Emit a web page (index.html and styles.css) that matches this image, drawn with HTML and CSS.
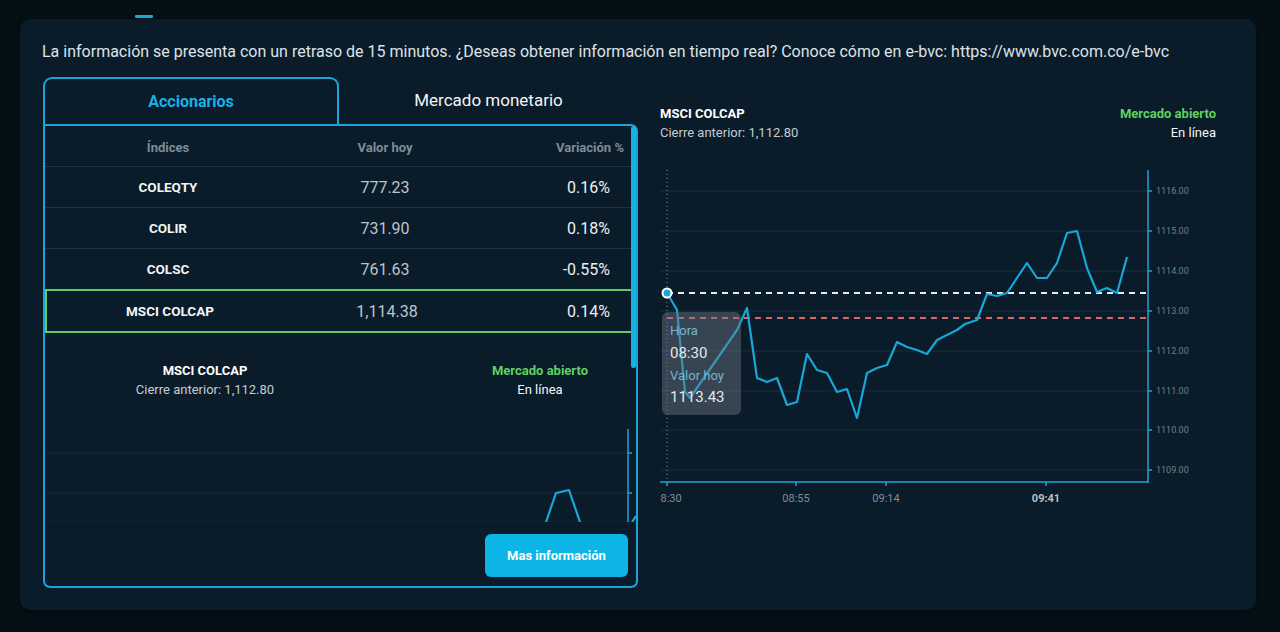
FILE: index.html
```html
<!DOCTYPE html>
<html lang="es">
<head>
<meta charset="utf-8">
<title>Índices</title>
<link rel="stylesheet" href="styles.css">
</head>
<body>
<div class="page">
  <div class="topmark"></div>
  <section class="card">
    <p class="notice">La información se presenta con un retraso de 15 minutos. ¿Deseas obtener información en tiempo real? Conoce cómo en e-bvc: https://www.bvc.com.co/e-bvc</p>
    <div class="content">
      <div class="left">
        <div class="tabs">
          <div class="tab tab-active">Accionarios</div>
          <div class="tab">Mercado monetario</div>
        </div>
        <div class="panel">
          <div class="scroll">
            <div class="table">
              <div class="row row-head">
                <div class="cell c1">Índices</div>
                <div class="cell c2">Valor hoy</div>
                <div class="cell c3">Variación %</div>
              </div>
              <div class="row">
                <div class="cell c1">COLEQTY</div>
                <div class="cell c2">777.23</div>
                <div class="cell c3">0.16%</div>
              </div>
              <div class="row">
                <div class="cell c1">COLIR</div>
                <div class="cell c2">731.90</div>
                <div class="cell c3">0.18%</div>
              </div>
              <div class="row">
                <div class="cell c1">COLSC</div>
                <div class="cell c2">761.63</div>
                <div class="cell c3">-0.55%</div>
              </div>
              <div class="row row-selected">
                <div class="cell c1">MSCI COLCAP</div>
                <div class="cell c2">1,114.38</div>
                <div class="cell c3">0.14%</div>
              </div>
            </div>
            <div class="summary summary-mini">
              <div class="sum-left">
                <div class="sum-title">MSCI COLCAP</div>
                <div class="sum-sub">Cierre anterior: 1,112.80</div>
              </div>
              <div class="sum-right">
                <div class="sum-status">Mercado abierto</div>
                <div class="sum-live">En línea</div>
              </div>
            </div>
            <svg class="mini" width="592" height="110" viewBox="0 0 592 110">
              <line x1="0" y1="34" x2="583" y2="34" class="grid"/>
              <line x1="0" y1="74" x2="583" y2="74" class="grid"/>
              <line x1="0" y1="103" x2="583" y2="103" class="grid"/>
              <line x1="583" y1="10" x2="583" y2="110" class="axis"/>
              <line x1="583" y1="34" x2="587" y2="34" class="axis"/>
              <line x1="583" y1="74" x2="587" y2="74" class="axis"/>
              <polyline points="501,103 511,74 524,71 535,103" class="series"/>
              <polyline points="587,103 591,97" class="series"/>
            </svg>
          </div>
          <div class="thumb"></div>
          <div class="actions"><button class="more">Mas información</button></div>
        </div>
      </div>
      <div class="right">
        <div class="summary summary-main">
          <div class="sum-left">
            <div class="sum-title">MSCI COLCAP</div>
            <div class="sum-sub">Cierre anterior: 1,112.80</div>
          </div>
          <div class="sum-right">
            <div class="sum-status">Mercado abierto</div>
            <div class="sum-live">En línea</div>
          </div>
        </div>
        <svg class="chart" width="574" height="360" viewBox="0 0 574 360">
          <line x1="0" y1="41" x2="488" y2="41" class="grid"/>
          <line x1="0" y1="81" x2="488" y2="81" class="grid"/>
          <line x1="0" y1="121" x2="488" y2="121" class="grid"/>
          <line x1="0" y1="161" x2="488" y2="161" class="grid"/>
          <line x1="0" y1="201" x2="488" y2="201" class="grid"/>
          <line x1="0" y1="241" x2="488" y2="241" class="grid"/>
          <line x1="0" y1="280" x2="488" y2="280" class="grid"/>
          <line x1="0" y1="320" x2="488" y2="320" class="grid"/>

          <line x1="488" y1="20" x2="488" y2="332.5" class="axis"/>
          <line x1="0" y1="332" x2="488.75" y2="332" class="axis"/>
          <g class="axis">
            <line x1="488" y1="41" x2="492" y2="41"/>
            <line x1="488" y1="81" x2="492" y2="81"/>
            <line x1="488" y1="121" x2="492" y2="121"/>
            <line x1="488" y1="161" x2="492" y2="161"/>
            <line x1="488" y1="201" x2="492" y2="201"/>
            <line x1="488" y1="241" x2="492" y2="241"/>
            <line x1="488" y1="280" x2="492" y2="280"/>
            <line x1="488" y1="320" x2="492" y2="320"/>
            <line x1="7" y1="332" x2="7" y2="336"/>
            <line x1="136" y1="332" x2="136" y2="336"/>
            <line x1="226" y1="332" x2="226" y2="336"/>
            <line x1="386" y1="332" x2="386" y2="336"/>
          </g>
          <g class="ylab">
            <text x="496" y="44">1116.00</text>
            <text x="496" y="84">1115.00</text>
            <text x="496" y="124">1114.00</text>
            <text x="496" y="164">1113.00</text>
            <text x="496" y="204">1112.00</text>
            <text x="496" y="244">1111.00</text>
            <text x="496" y="283">1110.00</text>
            <text x="496" y="323">1109.00</text>
          </g>
          <g class="xlab">
            <text x="8" y="352">08:30</text>
            <text x="136" y="352">08:55</text>
            <text x="226" y="352">09:14</text>
            <text x="386" y="352" class="xlab-strong">09:41</text>
          </g>

          <line x1="7" y1="20" x2="7" y2="332" class="crosshair"/>
          <line x1="7" y1="143" x2="488" y2="143" class="ref-white"/>
          <line x1="7" y1="168" x2="488" y2="168" class="ref-red"/>

          <polyline class="series" points="7,143 17,160 25,242 30,248 77,180 87,158 97,228 107,232 117,228 127,255 137,252 147,204 157,220 167,223 177,242 187,239 197,268 207,223 217,218 227,215 237,192 247,197 257,200 267,204 277,190 287,185 297,180 305,174 317,170 327,144 337,146 347,143 357,128 367,113 377,128 387,128 397,113 407,83 417,81 427,118 437,142 447,138 457,143 467,107"/>

          <circle cx="7" cy="143" r="5.5" class="dot-outer"/>
          <circle cx="7" cy="143" r="3.5" class="dot-inner"/>

          <rect x="2" y="162" width="79" height="103" rx="6" class="tip"/>
          <text x="10" y="185" class="tip-label">Hora</text>
          <text x="10" y="208" class="tip-value">08:30</text>
          <text x="10" y="230" class="tip-label">Valor hoy</text>
          <text x="10" y="252" class="tip-value">1113.43</text>
        </svg>
      </div>
    </div>
  </section>
</div>
</body>
</html>
```

FILE: styles.css
```css
* { box-sizing: border-box; }

html, body {
  margin: 0;
  padding: 0;
  background: #050f16;
  font-family: "Roboto", "Liberation Sans", sans-serif;
  color: #e8ecef;
}

.page {
  width: 1280px;
  height: 632px;
  padding: 15px 24px 0 20px;
  overflow: hidden;
}

.topmark {
  width: 18px;
  height: 3px;
  margin-left: 115px;
  margin-bottom: 1px;
  background: #19b0e4;
  border-radius: 1px;
}

.card {
  height: 591px;
  background: #0a1b29;
  border-radius: 10px;
  padding: 0 22px 0 23px;
  box-shadow: 0 2px 6px rgba(0, 0, 0, 0.4);
}

.notice {
  margin: 0 0 0 -1px;
  padding-top: 23px;
  height: 58px;
  font-size: 16px;
  line-height: 20px;
  color: #dde3e8;
  white-space: nowrap;
}

.content {
  display: flex;
  gap: 22px;
}

/* ---------- left column ---------- */
.left {
  width: 595px;
  flex: none;
}

.tabs {
  display: flex;
  height: 49px;
  margin-bottom: -2px;
  position: relative;
  z-index: 1;
}

.tab {
  display: flex;
  align-items: center;
  justify-content: center;
  font-size: 17px;
  color: #f2f4f6;
  padding-bottom: 3px;
}

.tab:first-child { width: 296px; }
.tab:last-child { flex: 1; }

.tab-active {
  border: 2px solid #1aa5da;
  border-bottom: none;
  border-radius: 9px 9px 0 0;
  color: #1cb0e6;
  font-weight: 700;
  font-size: 16px;
}

.panel {
  position: relative;
  height: 464px;
  border: 2px solid #1aa5da;
  border-radius: 0 7px 7px 7px;
  display: flex;
  flex-direction: column;
}

.scroll {
  height: 396px;
  overflow: hidden;
}

.table {
  width: 586px;
}

.row {
  display: grid;
  grid-template-columns: 246px 188px 1fr;
  height: 41px;
  align-items: center;
  border-bottom: 1px solid #233240;
}

.row-head {
  height: 41px;
  padding-top: 2px;
}

.cell {
  font-size: 16px;
  color: #edf0f2;
}

.c1 {
  text-align: center;
  font-weight: 700;
  font-size: 13.5px;
  color: #f3f5f7;
}

.c2 {
  text-align: center;
  color: #bcc5cc;
}

.c3 {
  text-align: right;
  padding-right: 21px;
}

.row-head .cell {
  font-size: 13px;
  font-weight: 700;
  color: #7d8c97;
}

.row-head .c3 {
  padding-right: 7px;
}

.row-selected {
  height: 44px;
  width: 588px;
  border: 2px solid #5fc95f;
  margin-top: -1px;
}

.summary {
  display: flex;
  justify-content: space-between;
  font-size: 13px;
  line-height: 19px;
}

.summary-mini {
  margin-top: 28px;
}

.summary-mini .sum-left {
  width: 320px;
  text-align: center;
}

.summary-mini .sum-right {
  width: 178px;
  margin-right: 7px;
  text-align: center;
}

.sum-title {
  font-weight: 700;
  color: #ffffff;
  font-size: 13px;
}

.sum-sub {
  color: #c5ccd2;
  font-size: 13px;
}

.sum-status {
  font-weight: 700;
  color: #5fd15f;
}

.sum-live {
  color: #f5f7f8;
}

.mini {
  display: block;
  margin-top: 20px;
}

.thumb {
  position: absolute;
  top: 0;
  right: 0;
  width: 5px;
  height: 242px;
  border-radius: 3px;
  background: #16b2e6;
}

.actions {
  display: flex;
  justify-content: flex-end;
  padding: 12px 8px 0 0;
}

.more {
  width: 143px;
  height: 43px;
  border: none;
  border-radius: 6px;
  background: #0db4e6;
  color: #ffffff;
  font-family: inherit;
  font-weight: 700;
  font-size: 13px;
}

/* ---------- right column ---------- */
.right {
  flex: 1;
  padding-top: 27px;
}

.summary-main {
  margin-right: 18px;
  height: 46px;
}

.summary-main .sum-right {
  text-align: right;
}

.chart {
  display: block;
  overflow: hidden;
}

.grid {
  stroke: #1a2d3c;
  stroke-width: 1;
}

.axis line, line.axis {
  stroke: #1ba6d8;
  stroke-width: 1.5;
}

.ylab text {
  font-size: 9px;
  fill: #6f808d;
  font-family: "Roboto", sans-serif;
}

.xlab text {
  font-size: 11px;
  fill: #7f8e99;
  text-anchor: middle;
  font-family: "Roboto", sans-serif;
}

.xlab .xlab-strong {
  fill: #b7c0c7;
  font-weight: 700;
}

.crosshair {
  stroke: #7d8d99;
  stroke-width: 1;
  stroke-dasharray: 1 3;
}

.ref-white {
  stroke: #e6ebee;
  stroke-width: 2;
  stroke-dasharray: 6 5;
}

.ref-red {
  stroke: #e06464;
  stroke-width: 2;
  stroke-dasharray: 6 5;
}

.series {
  fill: none;
  stroke: #17a7d9;
  stroke-width: 2.2;
  stroke-linejoin: round;
}

.dot-outer { fill: #ffffff; }
.dot-inner { fill: #1aa6dc; }

.tip {
  fill: rgba(110, 122, 133, 0.45);
}

.tip-label {
  font-size: 13px;
  fill: #75b4cc;
  font-family: "Roboto", sans-serif;
}

.tip-value {
  font-size: 15px;
  fill: #e3e8eb;
  font-family: "Roboto", sans-serif;
}
```
